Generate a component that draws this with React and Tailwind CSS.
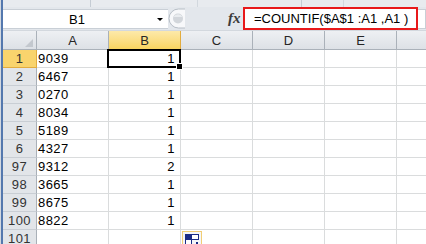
import clsx from "clsx";

const rows = [
  ["1", "9039", "1"],
  ["2", "6467", "1"],
  ["3", "0270", "1"],
  ["4", "8034", "1"],
  ["5", "5189", "1"],
  ["6", "4327", "1"],
  ["97", "9312", "2"],
  ["98", "3665", "1"],
  ["99", "8675", "1"],
  ["100", "8822", "1"],
  ["101", "", ""],
];

const cols = ["A", "B", "C", "D", "E"];

function CornerTriangle() {
  return (
    <svg width="8" height="8" viewBox="0 0 8 8" className="absolute bottom-[2px] right-[3px]">
      <path d="M8 0 L8 8 L0 8 Z" fill="#c3c8ce" />
    </svg>
  );
}

function CollapseGrip() {
  return (
    <svg width="18" height="21" viewBox="0 0 18 21" className="flex-none">
      <path d="M17 1 H10.5 A9.5 9.5 0 0 0 10.5 20 H17" fill="#f7f8fa" stroke="#b7bec6" />
      <circle cx="10" cy="10.5" r="5" fill="#d2d6db" />
      <path d="M5.5 9 A5 5 0 0 1 14.5 9" fill="#e9ecef" />
    </svg>
  );
}

function FillOptions() {
  return (
    <div className="absolute left-[182px] top-[231px] h-[16px] w-[20px] border border-[#f1cd74] bg-[#f4f6f9]">
      <svg width="18" height="14" viewBox="0 0 18 14" className="block">
        <rect x="2.5" y="2.5" width="6" height="5" fill="#1b2c86" stroke="#1b2c86" />
        <rect x="8.5" y="2.5" width="7" height="5" fill="#ffffff" stroke="#1b2c86" />
        <rect x="2.5" y="7.5" width="6" height="5" fill="#ffffff" stroke="#1b2c86" />
        <rect x="13" y="10" width="2" height="4" fill="#1b2c86" />
      </svg>
    </div>
  );
}

export default function App() {
  return (
    <div className="relative flex h-[244px] w-[426px] overflow-hidden bg-white font-['Liberation_Sans',Arial,sans-serif] text-[13px] text-black">
      {/* window edge */}
      <div className="w-[3px] flex-none border-l border-[#d3d9e1] bg-[#5478ae]" />

      <div className="flex min-w-0 flex-1 flex-col">
        {/* ribbon bottom */}
        <div className="flex h-[7px] flex-none bg-[#e8ebef]">
          <div className="w-[87px] flex-none" />
          <div className="w-[107px] flex-none border-l border-[#c5ccd4]" />
          <div className="w-[104px] flex-none border-l border-[#d2d8de]" />
          <div className="w-[42px] flex-none border-l border-[#c5ccd4]" />
          <div className="flex-1 border-l border-[#d2d8de]" />
        </div>

        {/* formula bar */}
        <div className="flex h-[23px] flex-none items-start bg-[#e3e7ec]">
          <div className="mt-[2px] flex h-[20px] w-[165px] flex-none items-center border-y border-[#c9cfd6] bg-white">
            <div className="w-[148px] text-center leading-none">B1</div>
            <div className="flex w-[17px] justify-center">
              <div className="h-0 w-0 border-x-[3px] border-t-[3px] border-x-transparent border-t-black" />
            </div>
          </div>
          <div className="mt-[1px]">
            <CollapseGrip />
          </div>
          <div className="w-[42px] flex-none" />
          <div className="mt-[3px] w-[15px] flex-none font-['Liberation_Serif',serif] text-[15px] font-bold italic leading-[17px] text-[#3b3b3b]">
            fx
          </div>
          <div className="flex h-[23px] w-[175px] flex-none items-center border-2 border-[#e8191b] bg-white pl-[9px] leading-none">
            =COUNTIF($A$1 :A1 ,A1 )
          </div>
          <div className="mt-[2px] h-[20px] flex-1 border-y border-r border-[#c9cfd6] bg-white" />
        </div>

        <div className="h-[1px] flex-none bg-[#d3d8de]" />

        {/* column headers */}
        <div className="flex h-[19px] flex-none text-[#262626]">
          <div className="relative w-[34px] flex-none border-b border-r border-[#aab1b9] bg-gradient-to-b from-[#eef0f3] to-[#dde1e6]">
            <CornerTriangle />
          </div>
          {cols.map((c) => (
            <div
              key={c}
              className={clsx(
                "flex w-[72px] flex-none items-center justify-center border-b border-r leading-none",
                c === "B"
                  ? "border-[#e2ac3f] bg-gradient-to-b from-[#fde9a9] to-[#f9d45f]"
                  : "border-[#aab1b9] bg-gradient-to-b from-[#eef0f3] to-[#dde1e6]"
              )}
            >
              {c}
            </div>
          ))}
          <div className="flex-1 border-b border-[#aab1b9] bg-gradient-to-b from-[#eef0f3] to-[#dde1e6]" />
        </div>

        {/* grid */}
        {rows.map(([n, a, b]) => (
          <div key={n} className="flex h-[18px] flex-none leading-[17px] tracking-[0.4px]">
            <div
              className={clsx(
                "w-[34px] flex-none border-b border-r text-center text-[#333]",
                n === "1"
                  ? "border-b-[#e2ac3f] border-r-[#e2ac3f] bg-[#f9d46d]"
                  : "border-b-[#c9ced4] border-r-[#a9b0b8] bg-[#e2e5e9]"
              )}
            >
              {n}
            </div>
            <div className="w-[72px] flex-none border-b border-r border-[#dadcdd] pl-[1px]">{a}</div>
            <div className="w-[72px] flex-none border-b border-r border-[#dadcdd] pr-[5px] text-right">{b}</div>
            <div className="w-[72px] flex-none border-b border-r border-[#dadcdd]" />
            <div className="w-[72px] flex-none border-b border-r border-[#dadcdd]" />
            <div className="w-[72px] flex-none border-b border-r border-[#dadcdd]" />
            <div className="flex-1 border-b border-[#dadcdd]" />
          </div>
        ))}
      </div>

      {/* active cell B1 */}
      <div className="absolute left-[107px] top-[49px] h-[19px] w-[74px] border-2 border-black" />
      <div className="absolute left-[176px] top-[63px] h-[7px] w-[7px] border border-white bg-black" />

      <FillOptions />
    </div>
  );
}
